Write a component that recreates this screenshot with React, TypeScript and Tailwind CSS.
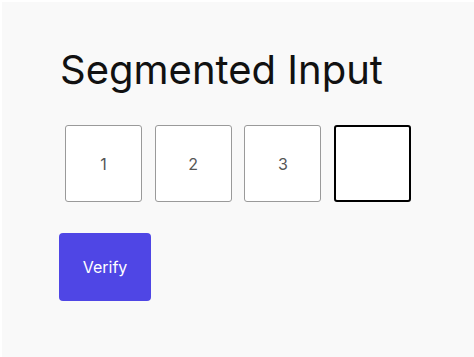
import React from "react";

export default function App() {
  const values = ["1", "2", "3", ""];
  return (
    <div className="w-[474px] h-[357px] bg-white">
      <div
        className="w-[472px] h-[355px] ml-[2px] mt-[2px] bg-[#f9f9f9] pl-[57px] pt-[43px]"
        style={{ fontFamily: "Inter, 'Liberation Sans', sans-serif" }}
      >
        <h1 className="ml-[1px] text-[40px] leading-[49px] text-[#111] font-normal">Segmented Input</h1>
        <div className="flex gap-[12.7px] mt-[31px] ml-[6px]">
          {values.map((v, i) => (
            <div
              key={i}
              className={
                i === 3
                  ? "w-[77px] h-[77px] bg-white border-2 border-black rounded-[3px] flex items-center justify-center"
                  : "w-[77px] h-[77px] bg-white border border-[#9a9a9a] rounded-[3px] flex items-center justify-center text-[16px] text-[#555]"
              }
            >
              {v}
            </div>
          ))}
        </div>
        <button className="mt-[31px] w-[92px] h-[68px] bg-[#4f46e5] rounded-[4px] text-white text-[16px]">
          Verify
        </button>
      </div>
    </div>
  );
}
